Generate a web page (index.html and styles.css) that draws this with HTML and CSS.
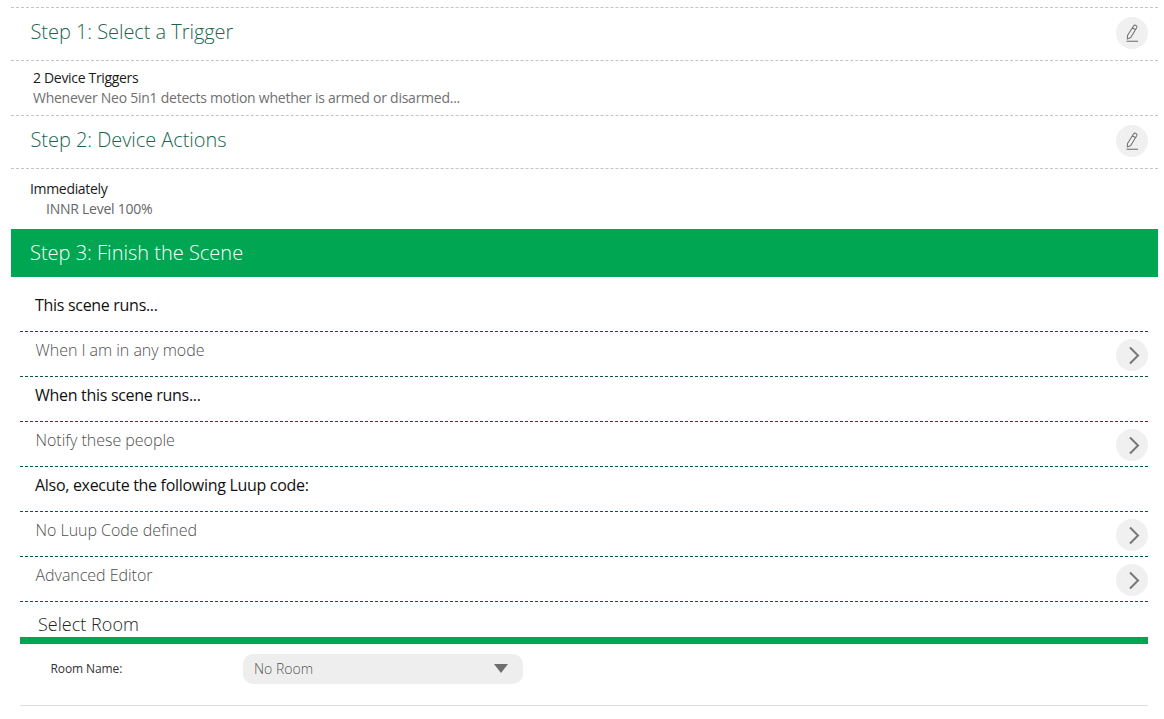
FILE: index.html
```html
<!DOCTYPE html>
<html lang="en">
<head>
<meta charset="utf-8">
<title>Scene</title>
<link rel="stylesheet" href="styles.css">
</head>
<body>
<main class="page">
  <section class="step-head step-head-first">
    <h2 class="step-title">Step 1: Select a Trigger</h2>
    <span class="round-btn"><svg width="16" height="20" viewBox="0 0 16 20"><path d="M3.5 12.5 L9.5 3 Q10.5 1.6 12 2.4 Q13.5 3.3 12.7 4.8 L6.7 14.6 L3.4 16 Z M8.4 4.8 L11.6 6.8" fill="none" stroke="#777" stroke-width="1.1"/><path d="M2.5 18.3 H14" stroke="#888" stroke-width="1.3"/></svg></span>
  </section>
  <section class="summary summary-trigger">
    <div class="summary-main">2 Device Triggers</div>
    <div class="summary-sub">Whenever Neo 5in1 detects motion whether is armed or disarmed...</div>
  </section>
  <section class="step-head">
    <h2 class="step-title">Step 2: Device Actions</h2>
    <span class="round-btn"><svg width="16" height="20" viewBox="0 0 16 20"><path d="M3.5 12.5 L9.5 3 Q10.5 1.6 12 2.4 Q13.5 3.3 12.7 4.8 L6.7 14.6 L3.4 16 Z M8.4 4.8 L11.6 6.8" fill="none" stroke="#777" stroke-width="1.1"/><path d="M2.5 18.3 H14" stroke="#888" stroke-width="1.3"/></svg></span>
  </section>
  <section class="summary summary-actions">
    <div class="summary-main">Immediately</div>
    <div class="summary-sub summary-indent">INNR Level 100%</div>
  </section>
  <section class="step-active"><h2 class="step-active-title">Step 3: Finish the Scene</h2></section>
  <section class="finish">
    <div class="row row-label row-first">This scene runs...</div>
    <div class="row row-link"><span>When I am in any mode</span><span class="round-btn round-chev"><svg width="12" height="20" viewBox="0 0 12 20"><path d="M2 2.5 L10 10.5 L2 18.5" fill="none" stroke="#777" stroke-width="2"/></svg></span></div>
    <div class="row row-label">When this scene runs...</div>
    <div class="row row-link"><span>Notify these people</span><span class="round-btn round-chev"><svg width="12" height="20" viewBox="0 0 12 20"><path d="M2 2.5 L10 10.5 L2 18.5" fill="none" stroke="#777" stroke-width="2"/></svg></span></div>
    <div class="row row-label">Also, execute the following Luup code:</div>
    <div class="row row-link"><span>No Luup Code defined</span><span class="round-btn round-chev"><svg width="12" height="20" viewBox="0 0 12 20"><path d="M2 2.5 L10 10.5 L2 18.5" fill="none" stroke="#777" stroke-width="2"/></svg></span></div>
    <div class="row row-link"><span>Advanced Editor</span><span class="round-btn round-chev"><svg width="12" height="20" viewBox="0 0 12 20"><path d="M2 2.5 L10 10.5 L2 18.5" fill="none" stroke="#777" stroke-width="2"/></svg></span></div>
    <h3 class="room-title">Select Room</h3>
    <div class="room-row">
      <span class="room-label">Room Name:</span>
      <div class="select"><span>No Room</span><span class="select-arrow"></span></div>
    </div>
  </section>
</main>
</body>
</html>
```
FILE: styles.css
```css
* { box-sizing: border-box; }
html, body { margin: 0; padding: 0; background: #fff; }
body { font-family: "Open Sans", "Liberation Sans", sans-serif; color: #222; overflow: hidden; }
.page { width: 1164px; height: 719px; padding: 7px 6px 0 11px; }
.step-head {
  height: 53px;
  border-bottom: 1px dashed #c4c4c4;
  display: flex;
  align-items: center;
  justify-content: space-between;
  padding: 0 10px 2px 19.5px;
}
.step-head-first { border-top: 1px dashed #c4c4c4; height: 54px; }
.step-title { margin: 0; padding-bottom: 4px; font-size: 20px; font-weight: 300; letter-spacing: -0.05px; color: #1a6650; }
.round-btn {
  width: 32px; height: 32px; border-radius: 50%;
  background: #f0f0f0;
  display: flex; align-items: center; justify-content: center;
  flex: none;
}
.summary { font-size: 14px; line-height: 20px; }
.summary-trigger { height: 55px; padding: 7px 0 0 22px; border-bottom: 1px dashed #c4c4c4; }
.summary-actions { height: 60px; padding: 10px 0 0 19px; }
.summary-main { color: #1a1a1a; letter-spacing: -0.32px; }
.summary-sub { color: #707070; letter-spacing: -0.25px; }
.summary-indent { padding-left: 16px; color: #666; }
.step-active { height: 48px; background: #00a652; display: flex; align-items: center; padding: 0 0 2px 19px; }
.step-active-title { margin: 0; font-size: 20px; font-weight: 300; color: #fff; }
.finish { padding: 0 10px 0 9px; }
.row { height: 45px; border-bottom: 1px dashed #0a5548; display: flex; align-items: center; justify-content: space-between; padding: 0 0 8px 15.5px; font-size: 16px; }
.row-first { height: 55px; padding: 4px 0 2px 15px; }
.row-label { color: #111; padding-left: 15px; letter-spacing: -0.3px; }
.row-link { color: #4f4f4f; font-weight: 300; letter-spacing: -0.03px; }
.round-chev { position: relative; top: 5px; padding-left: 3px; }
.room-title { margin: 0; height: 35px; padding: 11px 0 0 18px; font-size: 18px; line-height: 22px; font-weight: 300; letter-spacing: 0.03px; color: #222; }
.room-row { border-top: 7px solid #00a652; height: 69px; border-bottom: 1px solid #ddd; display: flex; align-items: flex-start; padding-top: 10px; }
.room-label { width: 223px; padding-left: 30.5px; font-size: 12px; line-height: 29px; letter-spacing: -0.1px; color: #333; }
.select { width: 280px; height: 30px; border-radius: 10px; background: #eeeeee; display: flex; align-items: center; justify-content: space-between; padding: 0 15px 2px 11px; font-size: 14px; font-weight: 300; color: #555; }
.select-arrow { width: 0; height: 0; border-left: 7px solid transparent; border-right: 7px solid transparent; border-top: 9px solid #6e6e6e; }
```
